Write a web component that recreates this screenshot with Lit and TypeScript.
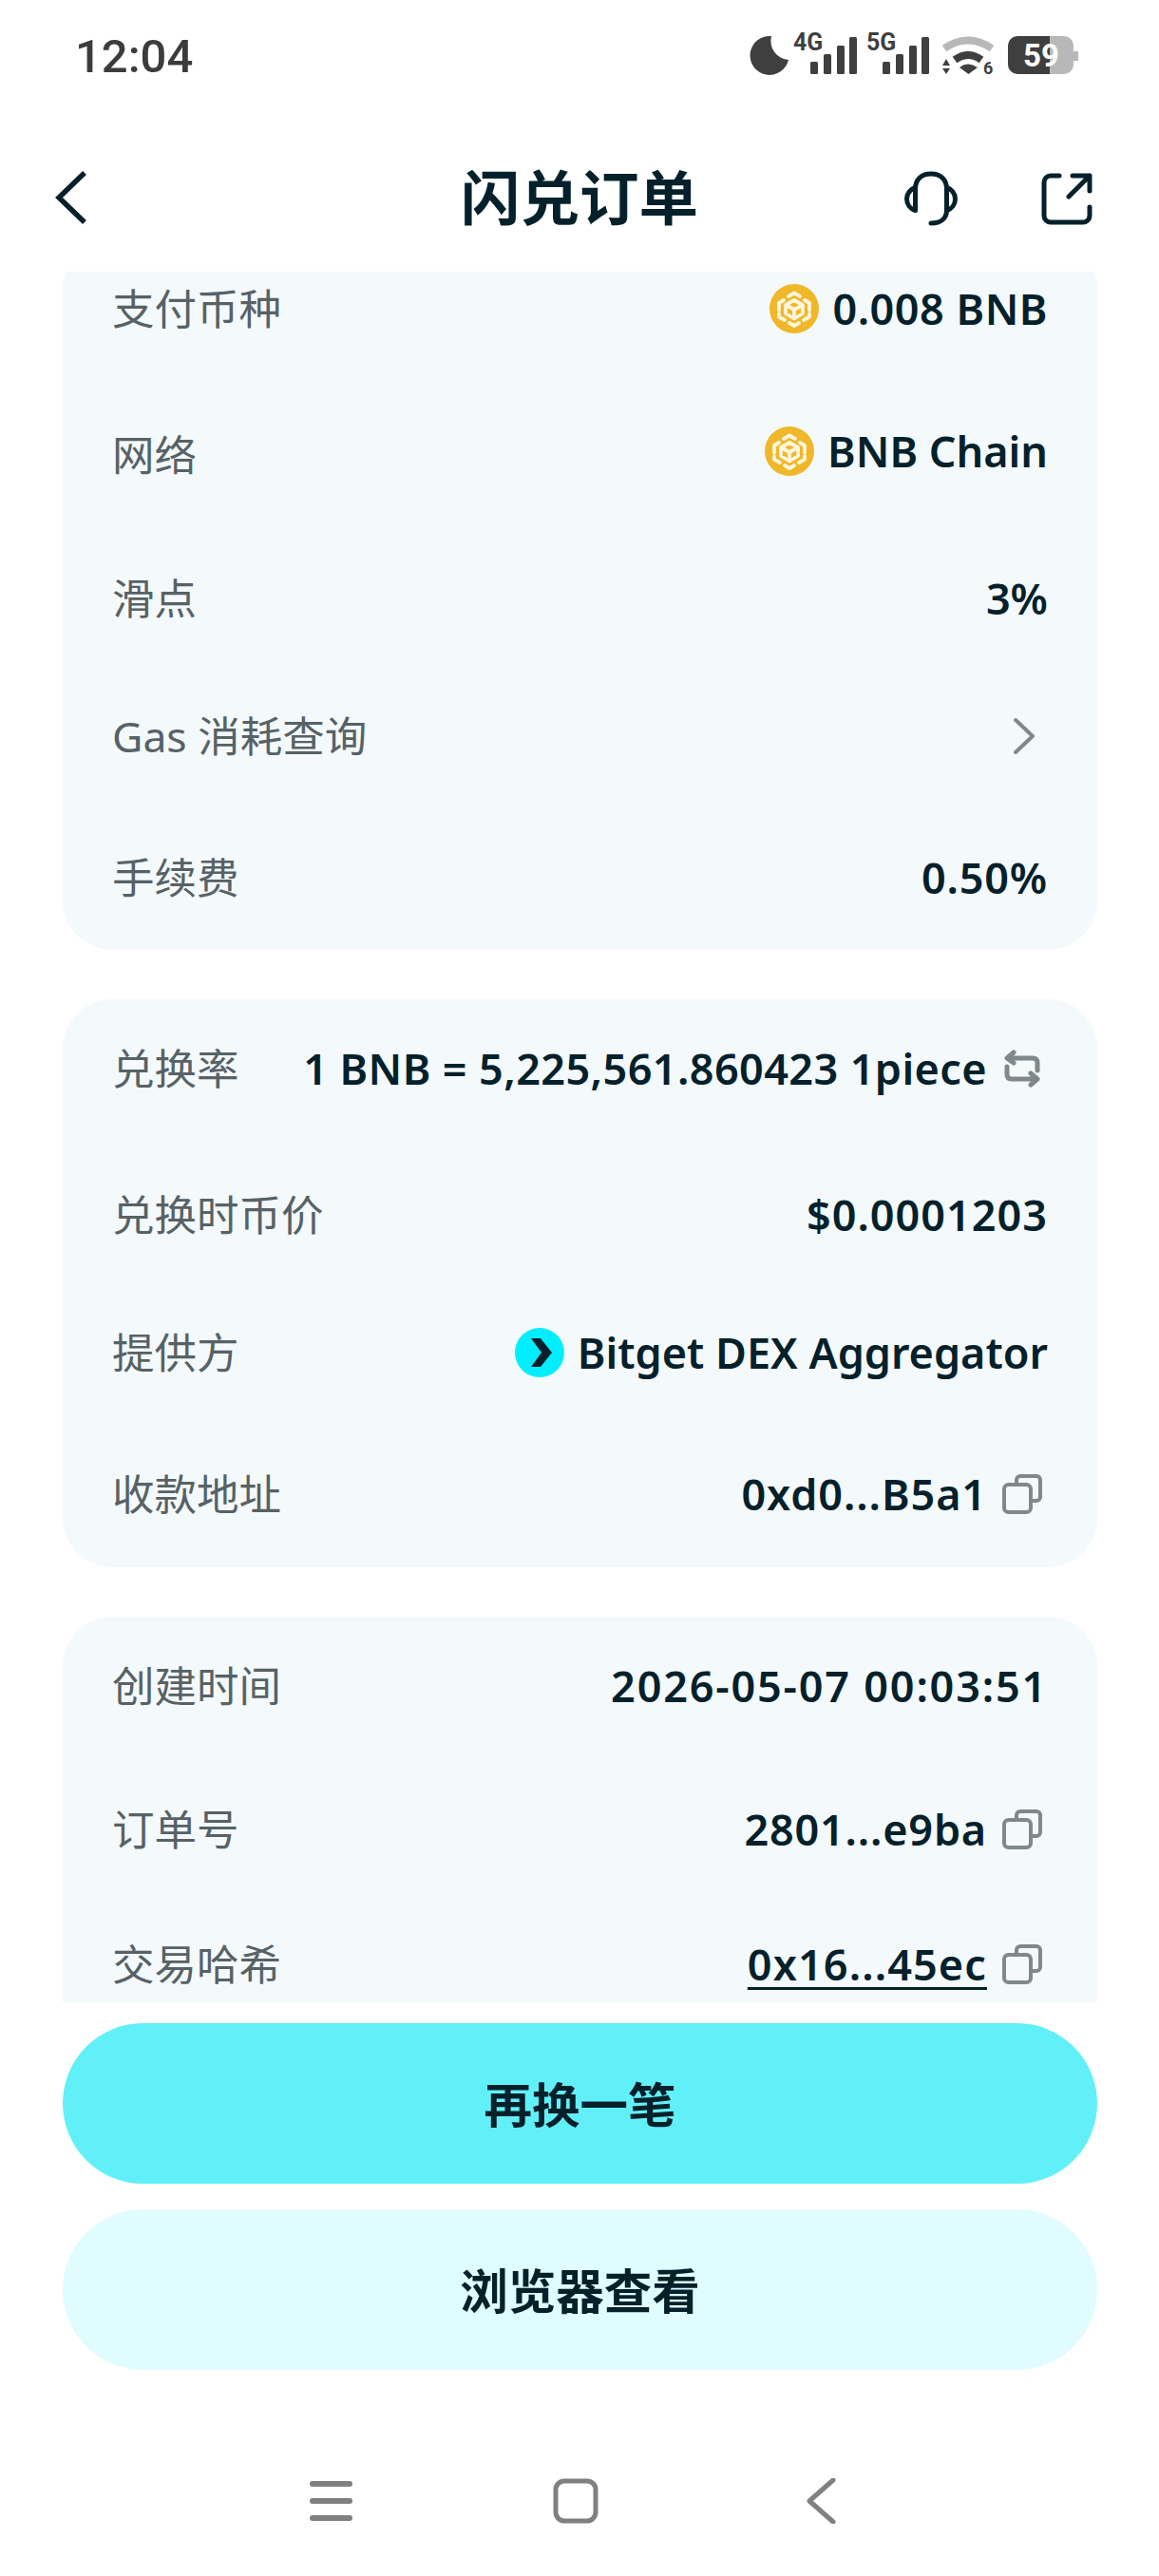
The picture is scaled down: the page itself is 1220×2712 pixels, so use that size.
import { LitElement, html, css, svg } from "lit";
import { customElement } from "lit/decorators.js";

const bnb = html`<svg class="coin" viewBox="0 0 52 52"><circle cx="26" cy="26" r="26" fill="#F0B72A"/><g fill="none" stroke="#fff6dc" stroke-width="3.800" stroke-linejoin="round" stroke-linecap="round"><path d="M20 13 26 9.500l6 3.500M37 17l5 3v7.500M42 31.500v3L36 38M16 38l-6-3.500v-3M10 27.500V20l5-3M21 41l5 3 5-3"/><path d="M26 17l9 5v9l-9 5.500L17 31v-9zM17 22l9 5 9-5M26 27v9"/></g></svg>`;
const bitget = html`<svg class="coin" viewBox="0 0 52 52"><circle cx="26" cy="26" r="26" fill="#00EFFE"/><path d="M17 11h10l12 15-12 15H17l11-15z" fill="#04212B"/></svg>`;
const copy = html`<svg class="ic copy" viewBox="0 0 44 44" fill="none" stroke="#7F898B" stroke-width="4"><path d="M16 11V7A4 4 0 0 1 20 3h17a4 4 0 0 1 4 4v18a4 4 0 0 1-4 4h-6"/><rect x="3" y="12" width="28" height="29" rx="4.500"/></svg>`;
const swap = html`<svg class="ic swap" viewBox="0 0 40 40" fill="none" stroke="#7F898B" stroke-width="5" stroke-linecap="round" stroke-linejoin="round"><path d="M36 22v-8q0-5-5-5H5M11 3 4 9l7 5M4 18v8q0 5 5 5h26M29 25l7 6-7 6"/></svg>`;
const chevron = html`<svg class="ic chev" viewBox="0 0 24 40" fill="none" stroke="#7F898B" stroke-width="4" stroke-linecap="round" stroke-linejoin="round"><path d="M3 3l18 17L3 37"/></svg>`;

type Row = { label: string; value?: string; h: number; pre?: unknown; post?: unknown; link?: boolean; up?: boolean; ls?: number };

const cards: Row[][] = [
  [
    { label: "支付币种", value: "0.008 BNB", pre: bnb, h: 154, ls: 0.5 },
    { label: "网络", value: "BNB Chain", pre: bnb, h: 151, up: true },
    { label: "滑点", value: "3%", h: 145 },
    { label: "Gas 消耗查询", post: chevron, h: 149 },
    { label: "手续费", value: "0.50%", h: 106, ls: 0.8 },
  ],
  [
    { label: "兑换率", value: "1 BNB = 5,225,561.860423 1piece", post: swap, h: 154, ls: 0.4 },
    { label: "兑换时币价", value: "$0.0001203", h: 145, ls: 1 },
    { label: "提供方", value: "Bitget DEX Aggregator", pre: bitget, h: 149 },
    { label: "收款地址", value: "0xd0...B5a1", post: copy, h: 107, ls: 0.9 },
  ],
  [
    { label: "创建时间", value: "2026-05-07 00:03:51", h: 151, ls: 1.8 },
    { label: "订单号", value: "2801...e9ba", post: copy, h: 142, ls: 0.8 },
    { label: "交易哈希", value: "0x16...45ec", post: copy, link: true, h: 200, ls: 1.1 },
  ],
];

@customElement("app-root")
export class AppRoot extends LitElement {
  static styles = css`
    :host {
      display: flex;
      flex-direction: column;
      width: 1220px;
      height: 2712px;
      background: #fff;
      color: #04212b;
      font-family: "Noto Sans", "Noto Sans CJK SC", sans-serif;
      overflow: hidden;
    }
    .status {
      height: 119px;
      flex: none;
      display: flex;
      justify-content: space-between;
      align-items: flex-start;
      padding: 30px 0 0 79px;
      box-sizing: border-box;
    }
    .time {
      font: 500 49px/60px Roboto, sans-serif;
      color: #3c3c3c;
    }
    .sys {
      width: 360px;
      height: 60px;
      margin-right: 80px;
      flex: none;
    }
    .sys text {
      font-family: Roboto, sans-serif;
      font-weight: 700;
    }
    .head {
      height: 167px;
      flex: none;
      display: flex;
      align-items: center;
      justify-content: space-between;
      padding: 10px 70px 0 57px;
      box-sizing: border-box;
      position: relative;
    }
    .title {
      position: absolute;
      left: 0;
      right: 0;
      top: 48px;
      text-align: center;
      font: 700 62.500px/76px "Noto Sans CJK SC", sans-serif;
    }
    .head-right {
      display: flex;
      align-items: center;
      gap: 86px;
      margin-top: 4px;
    }
    .back {
      width: 34px;
      height: 56px;
    }
    .headset {
      width: 60px;
      height: 60px;
    }
    .share {
      width: 54px;
      height: 55px;
    }
    .scroll {
      height: 1822px;
      flex: none;
      overflow: hidden;
      padding: 0 65px 0 66px;
      display: flex;
      flex-direction: column;
      gap: 52px;
    }
    .card {
      flex: none;
      background: #f4f9fb;
      border-radius: 52px;
      padding: 43px 52px 0;
    }
    .card.first {
      margin-top: -34px;
    }
    .row {
      display: flex;
      align-items: flex-start;
      justify-content: space-between;
    }
    .label {
      font-size: 44.500px;
      line-height: 60px;
      color: #566266;
    }
    .right {
      display: flex;
      align-items: center;
      gap: 14px;
      height: 60px;
    }
    .right.up {
      margin-top: -4px;
    }
    .value {
      font-size: 45px;
      font-weight: 600;
      line-height: 60px;
      white-space: nowrap;
    }
    .value.link {
      text-decoration: underline;
      text-underline-offset: 7px;
      text-decoration-thickness: 3px;
    }
    .coin {
      width: 52px;
      height: 52px;
      flex: none;
    }
    .ic {
      flex: none;
    }
    .copy {
      width: 44px;
      height: 44px;
      margin: 0 5px 0 1px;
    }
    .swap {
      width: 40px;
      height: 40px;
      margin: 0 7px 0 3px;
    }
    .chev {
      width: 24px;
      height: 40px;
      margin-right: 13px;
    }
    .actions {
      flex: none;
      padding: 22px 65px 0 66px;
      display: flex;
      flex-direction: column;
      gap: 27px;
    }
    .btn {
      height: 169px;
      border-radius: 85px;
      display: flex;
      align-items: center;
      justify-content: center;
      box-sizing: border-box;
      padding-bottom: 4px;
      font: 700 50.500px/60px "Noto Sans CJK SC", sans-serif;
      background: #62f0f8;
    }
    .btn.soft {
      background: #e0fcff;
    }
    .nav {
      flex: 1;
      display: flex;
      align-items: flex-start;
      padding: 114px 0 0 325px;
      gap: 212px;
    }
    .nav svg {
      width: 48px;
      height: 48px;
      flex: none;
    }
    .nav svg:first-child {
      margin-right: -3px;
    }
  `;

  private renderRow(r: Row) {
    return html`<div class="row" style="height:${r.h}px">
      <span class="label">${r.label}</span>
      <span class="right ${r.up ? "up" : ""}">
        ${r.pre ?? ""}
        ${r.value ? html`<span class="value ${r.link ? "link" : ""}" style="letter-spacing:${r.ls ?? 0}px">${r.value}</span>` : ""}
        ${r.post ?? ""}
      </span>
    </div>`;
  }

  private bars(x: number) {
    return svg`<g fill="#3f3f3f">
      <rect x="${x}" y="27" width="8" height="13" rx="1.500"/>
      <rect x="${x + 14}" y="19" width="8" height="21" rx="1.500"/>
      <rect x="${x + 28}" y="10" width="8" height="30" rx="1.500"/>
      <rect x="${x + 41}" y="1" width="8" height="39" rx="1.500"/>
    </g>`;
  }

  render() {
    return html`
      <div class="status">
        <span class="time">12:04</span>
        <svg class="sys" viewBox="0 0 360 60">
          <g transform="translate(0 8)">
            <path d="M32 0A20.500 20.500 0 1 0 50 25A20 20 0 0 1 32 0z" fill="#3f3f3f"/>
            <text x="55" y="15" font-size="25" fill="#3f3f3f">4G</text>
            ${this.bars(73)}
            <text x="132" y="15" font-size="25" fill="#3f3f3f">5G</text>
            ${this.bars(149)}
            <path d="M214 13q25-17 50 0" fill="none" stroke="#b8b8b8" stroke-width="8"/>
            <path d="M225 25q14-10 28 0" fill="none" stroke="#3f3f3f" stroke-width="8"/>
            <path d="M230 33q9-7 19 0l-9.500 7z" fill="#3f3f3f"/>
            <path d="M212 31l4-7 4 7zM212 34l4 6 4-6z" fill="#3f3f3f"/>
            <text x="255" y="40" font-size="18" fill="#3f3f3f">6</text>
            <path d="M300 0h40a10 10 0 0 1 10 10v6h5v10h-5v4a10 10 0 0 1-10 10h-40z" fill="#b8b8b8"/>
            <path d="M291 0h34v40h-34a10 10 0 0 1-10-10V10a10 10 0 0 1 10-10z" fill="#3f3f3f"/>
            <text x="297" y="32" font-size="33" fill="#fff">59</text>
          </g>
        </svg>
      </div>
      <div class="head">
        <svg class="back" viewBox="0 0 34 56" fill="none" stroke="#04212b" stroke-width="5.500"><path d="M32 2 5 28l27 26"/></svg>
        <div class="title">闪兑订单</div>
        <div class="head-right">
          <svg class="headset" viewBox="0 0 60 60" fill="none" stroke="#04212b" stroke-width="5" stroke-linecap="round" stroke-linejoin="round"><path d="M13.500 41V19C13.500 8 21 3 30 3s16.500 5 16.500 16v22c0 9-6 14-16.500 14"/><path d="M13.500 17.500A12.500 12.500 0 0 0 13.500 41.500zM46.500 17.500A12.500 12.500 0 0 1 46.500 41.500"/></svg>
          <svg class="share" viewBox="0 0 54 55" fill="none" stroke="#04212b" stroke-width="5" stroke-linecap="round" stroke-linejoin="round"><path d="M19 3H10a7 7 0 0 0-7 7v35a7 7 0 0 0 7 7h34a7 7 0 0 0 7-7v-9"/><path d="M29 25 51 3M33 3h18v16"/></svg>
        </div>
      </div>
      <div class="scroll">
        ${cards.map((c, i) => html`<div class="card ${i === 0 ? "first" : ""}">${c.map((r) => this.renderRow(r))}</div>`)}
      </div>
      <div class="actions">
        <div class="btn">再换一笔</div>
        <div class="btn soft">浏览器查看</div>
      </div>
      <div class="nav">
        <svg viewBox="0 0 48 48" fill="#808080"><rect x="1" y="3" width="45" height="6" rx="3"/><rect x="1" y="21" width="45" height="6" rx="3"/><rect x="1" y="39" width="45" height="6" rx="3"/></svg>
        <svg viewBox="0 0 48 48" fill="none" stroke="#808080" stroke-width="5"><rect x="3" y="3" width="42" height="42" rx="9"/></svg>
        <svg viewBox="0 0 48 48" fill="none" stroke="#808080" stroke-width="5" stroke-linecap="round" stroke-linejoin="round"><path d="M35 2 10 24l25 22"/></svg>
      </div>
    `;
  }
}
